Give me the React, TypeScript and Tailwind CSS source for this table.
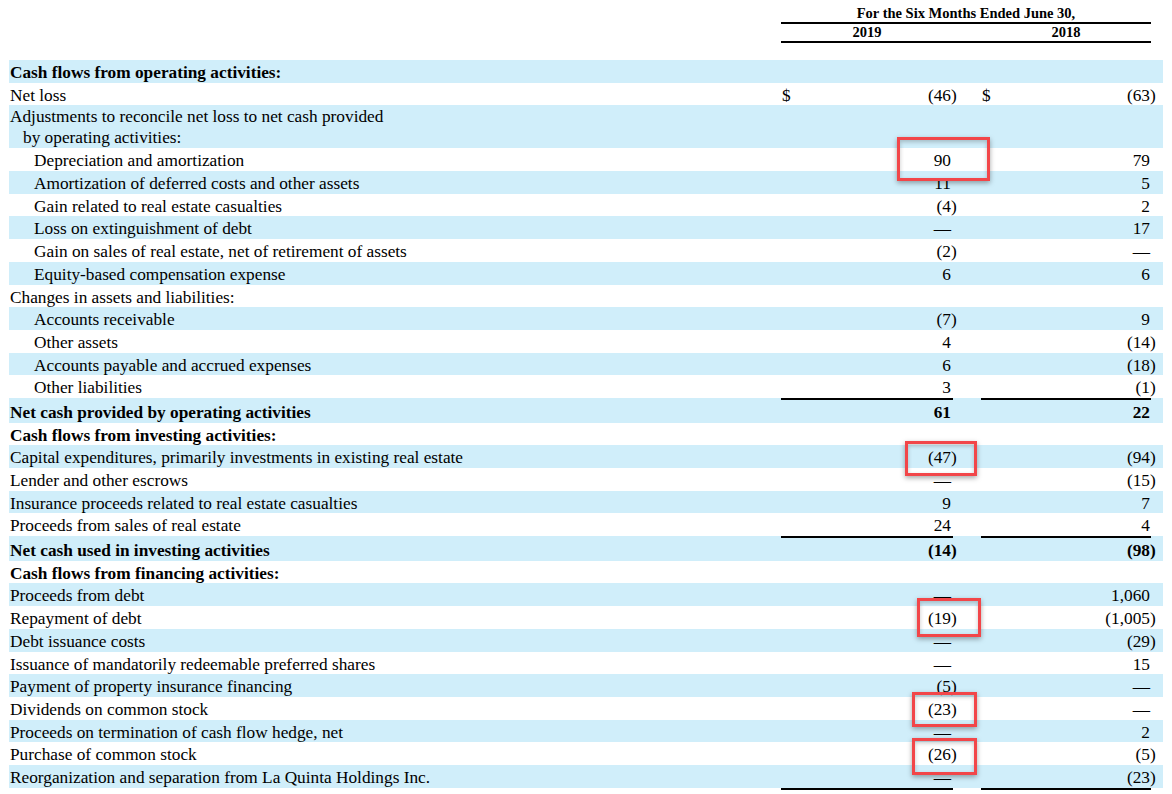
import React from "react";

type Row = {
  label: string;
  cont?: string;
  indent?: number;
  bold?: boolean;
  total?: boolean;
  dollar?: boolean;
  v19?: string;
  v18?: string;
};

const rows: Row[] = [
  { label: "Cash flows from operating activities:", bold: true },
  { label: "Net loss", dollar: true, v19: "(46)", v18: "(63)" },
  { label: "Adjustments to reconcile net loss to net cash provided", cont: "by operating activities:" },
  { label: "Depreciation and amortization", indent: 1, v19: "90", v18: "79" },
  { label: "Amortization of deferred costs and other assets", indent: 1, v19: "11", v18: "5" },
  { label: "Gain related to real estate casualties", indent: 1, v19: "(4)", v18: "2" },
  { label: "Loss on extinguishment of debt", indent: 1, v19: "—", v18: "17" },
  { label: "Gain on sales of real estate, net of retirement of assets", indent: 1, v19: "(2)", v18: "—" },
  { label: "Equity-based compensation expense", indent: 1, v19: "6", v18: "6" },
  { label: "Changes in assets and liabilities:" },
  { label: "Accounts receivable", indent: 1, v19: "(7)", v18: "9" },
  { label: "Other assets", indent: 1, v19: "4", v18: "(14)" },
  { label: "Accounts payable and accrued expenses", indent: 1, v19: "6", v18: "(18)" },
  { label: "Other liabilities", indent: 1, v19: "3", v18: "(1)" },
  { label: "Net cash provided by operating activities", bold: true, total: true, v19: "61", v18: "22" },
  { label: "Cash flows from investing activities:", bold: true },
  { label: "Capital expenditures, primarily investments in existing real estate", v19: "(47)", v18: "(94)" },
  { label: "Lender and other escrows", v19: "—", v18: "(15)" },
  { label: "Insurance proceeds related to real estate casualties", v19: "9", v18: "7" },
  { label: "Proceeds from sales of real estate", v19: "24", v18: "4" },
  { label: "Net cash used in investing activities", bold: true, total: true, v19: "(14)", v18: "(98)" },
  { label: "Cash flows from financing activities:", bold: true },
  { label: "Proceeds from debt", v19: "—", v18: "1,060" },
  { label: "Repayment of debt", v19: "(19)", v18: "(1,005)" },
  { label: "Debt issuance costs", v19: "—", v18: "(29)" },
  { label: "Issuance of mandatorily redeemable preferred shares", v19: "—", v18: "15" },
  { label: "Payment of property insurance financing", v19: "(5)", v18: "—" },
  { label: "Dividends on common stock", v19: "(23)", v18: "—" },
  { label: "Proceeds on termination of cash flow hedge, net", v19: "—", v18: "2" },
  { label: "Purchase of common stock", v19: "(26)", v18: "(5)" },
  { label: "Reorganization and separation from La Quinta Holdings Inc.", v19: "—", v18: "(23)" },
  // subtotal row below the fold: only its rules show at the bottom edge
  { label: "", total: true },
];

// red highlight boxes drawn over the 2019 column
const marks = [
  "left-[897px] top-[137px] h-[44px] w-[93px]",
  "left-[905px] top-[441px] h-[35px] w-[72px]",
  "left-[917px] top-[598px] h-[39px] w-[64px]",
  "left-[912px] top-[692px] h-[35px] w-[65px]",
  "left-[912px] top-[738px] h-[37px] w-[65px]",
];

function splitValue(v?: string) {
  if (!v) return ["", ""];
  if (v.startsWith("(")) return [v.slice(0, -1), ")"];
  return [v, ""];
}

function ValueCell({ value, dollar, rule, wide }: { value?: string; dollar?: boolean; rule?: boolean; wide?: boolean }) {
  const [num, paren] = splitValue(value);
  return (
    <div className={`flex flex-col ${wide ? "w-[177px]" : "w-[176px]"}`}>
      {rule && <div className={`h-[2px] bg-black ${wide ? "w-[172px]" : "w-[170px]"}`} />}
      <div className="flex h-[22.7px] pt-[3px] leading-[19.7px]">
        <span className="w-[14px] pl-[1px]">{dollar ? "$" : ""}</span>
        <span className="flex-1 text-right">{num}</span>
        <span className="w-[7px]">{paren}</span>
      </div>
    </div>
  );
}

export default function App() {
  return (
    <div className="relative h-[794px] w-[1172px] overflow-hidden bg-white font-['Liberation_Serif','Times_New_Roman',serif] text-black">
      <div className="flex px-[9px] pt-[5px]">
        <div className="flex-1" />
        <div className="mr-[12px] w-[370px] text-[14.5px] font-bold leading-[17px]">
          <div className="border-b-2 border-black text-center">For the Six Months Ended June 30,</div>
          <div className="flex border-b-2 border-black">
            <div className="w-[172px] text-center">2019</div>
            <div className="w-[28px]" />
            <div className="w-[170px] text-center">2018</div>
          </div>
        </div>
      </div>

      <div className="mx-[9px] mt-[17px] text-[17.3px]">
        {rows.map((row, i) => (
          <div
            key={row.label || "subtotal"}
            className={`flex ${i % 2 === 0 ? "bg-[#d0eefa]" : ""} ${row.bold ? "font-bold" : ""}`}
          >
            <div className={`flex-1 ${row.total ? "pt-[2px]" : ""} ${row.indent ? "pl-[25px]" : "pl-[1px]"}`}>
              {row.cont ? (
                <div className="h-[43px] pt-[2px] leading-[20.5px]">
                  <div>{row.label}</div>
                  <div className="pl-[13px]">{row.cont}</div>
                </div>
              ) : (
                <div className="h-[22.7px] whitespace-nowrap pt-[3px] leading-[19.7px]">{row.label}</div>
              )}
            </div>
            <ValueCell value={row.v19} dollar={row.dollar} rule={row.total} wide />
            <div className="w-[23px]" />
            <ValueCell value={row.v18} dollar={row.dollar} rule={row.total} />
            <div className="w-[6px]" />
          </div>
        ))}
      </div>

      {marks.map((m) => (
        <div
          key={m}
          className={`absolute ${m} border-[3px] border-[#f24649] shadow-[0_2px_5px_rgba(0,0,0,0.35),inset_0_2px_4px_rgba(0,0,0,0.22)]`}
        />
      ))}
    </div>
  );
}
